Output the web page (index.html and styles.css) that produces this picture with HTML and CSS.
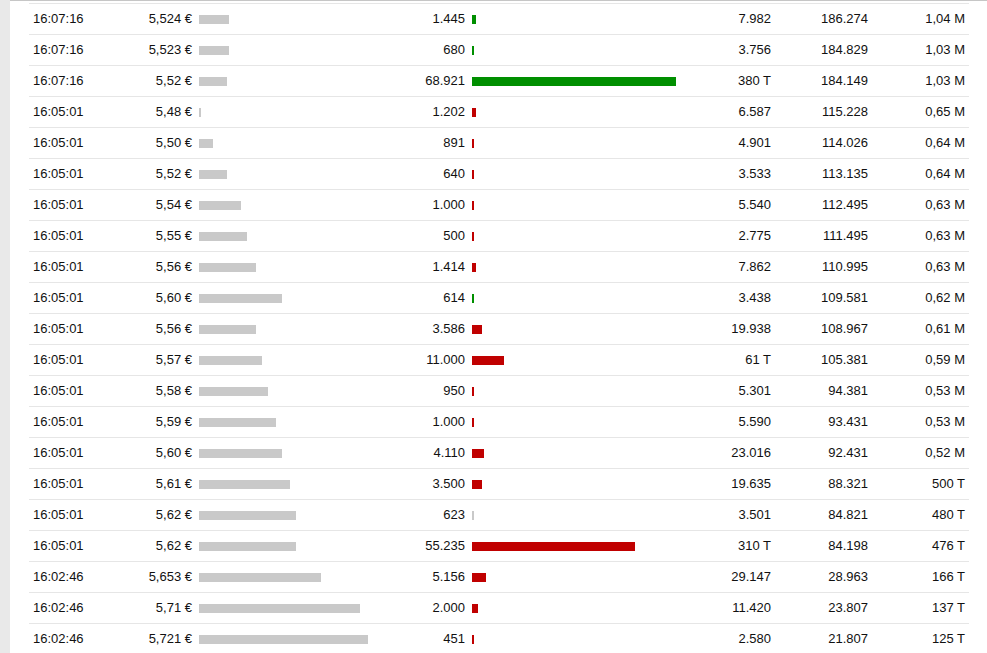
FILE: index.html
```html
<!DOCTYPE html>
<html>
<head>
<meta charset="utf-8">
<link rel="stylesheet" href="styles.css">
</head>
<body>
<div class="page">
  <div class="strip"></div>
  <div class="main">
    <div class="table">
      <div class="row"><span class="time">16:07:16</span><span class="num">5,524 €</span><span class="bars"><i class="pbar" style="width:30px"></i></span><span class="num">1.445</span><span class="bars"><i class="vbar up" style="width:4px"></i></span><span class="num">7.982</span><span class="num">186.274</span><span class="num">1,04 M</span></div>
      <div class="row"><span class="time">16:07:16</span><span class="num">5,523 €</span><span class="bars"><i class="pbar" style="width:30px"></i></span><span class="num">680</span><span class="bars"><i class="vbar up" style="width:2px"></i></span><span class="num">3.756</span><span class="num">184.829</span><span class="num">1,03 M</span></div>
      <div class="row"><span class="time">16:07:16</span><span class="num">5,52 €</span><span class="bars"><i class="pbar" style="width:28px"></i></span><span class="num">68.921</span><span class="bars"><i class="vbar up" style="width:204px"></i></span><span class="num">380 T</span><span class="num">184.149</span><span class="num">1,03 M</span></div>
      <div class="row"><span class="time">16:05:01</span><span class="num">5,48 €</span><span class="bars"><i class="pbar" style="width:2px"></i></span><span class="num">1.202</span><span class="bars"><i class="vbar down" style="width:4px"></i></span><span class="num">6.587</span><span class="num">115.228</span><span class="num">0,65 M</span></div>
      <div class="row"><span class="time">16:05:01</span><span class="num">5,50 €</span><span class="bars"><i class="pbar" style="width:14px"></i></span><span class="num">891</span><span class="bars"><i class="vbar down" style="width:2px"></i></span><span class="num">4.901</span><span class="num">114.026</span><span class="num">0,64 M</span></div>
      <div class="row"><span class="time">16:05:01</span><span class="num">5,52 €</span><span class="bars"><i class="pbar" style="width:28px"></i></span><span class="num">640</span><span class="bars"><i class="vbar down" style="width:2px"></i></span><span class="num">3.533</span><span class="num">113.135</span><span class="num">0,64 M</span></div>
      <div class="row"><span class="time">16:05:01</span><span class="num">5,54 €</span><span class="bars"><i class="pbar" style="width:42px"></i></span><span class="num">1.000</span><span class="bars"><i class="vbar down" style="width:2px"></i></span><span class="num">5.540</span><span class="num">112.495</span><span class="num">0,63 M</span></div>
      <div class="row"><span class="time">16:05:01</span><span class="num">5,55 €</span><span class="bars"><i class="pbar" style="width:48px"></i></span><span class="num">500</span><span class="bars"><i class="vbar down" style="width:2px"></i></span><span class="num">2.775</span><span class="num">111.495</span><span class="num">0,63 M</span></div>
      <div class="row"><span class="time">16:05:01</span><span class="num">5,56 €</span><span class="bars"><i class="pbar" style="width:57px"></i></span><span class="num">1.414</span><span class="bars"><i class="vbar down" style="width:4px"></i></span><span class="num">7.862</span><span class="num">110.995</span><span class="num">0,63 M</span></div>
      <div class="row"><span class="time">16:05:01</span><span class="num">5,60 €</span><span class="bars"><i class="pbar" style="width:83px"></i></span><span class="num">614</span><span class="bars"><i class="vbar up" style="width:2px"></i></span><span class="num">3.438</span><span class="num">109.581</span><span class="num">0,62 M</span></div>
      <div class="row"><span class="time">16:05:01</span><span class="num">5,56 €</span><span class="bars"><i class="pbar" style="width:57px"></i></span><span class="num">3.586</span><span class="bars"><i class="vbar down" style="width:10px"></i></span><span class="num">19.938</span><span class="num">108.967</span><span class="num">0,61 M</span></div>
      <div class="row"><span class="time">16:05:01</span><span class="num">5,57 €</span><span class="bars"><i class="pbar" style="width:63px"></i></span><span class="num">11.000</span><span class="bars"><i class="vbar down" style="width:32px"></i></span><span class="num">61 T</span><span class="num">105.381</span><span class="num">0,59 M</span></div>
      <div class="row"><span class="time">16:05:01</span><span class="num">5,58 €</span><span class="bars"><i class="pbar" style="width:69px"></i></span><span class="num">950</span><span class="bars"><i class="vbar down" style="width:2px"></i></span><span class="num">5.301</span><span class="num">94.381</span><span class="num">0,53 M</span></div>
      <div class="row"><span class="time">16:05:01</span><span class="num">5,59 €</span><span class="bars"><i class="pbar" style="width:77px"></i></span><span class="num">1.000</span><span class="bars"><i class="vbar down" style="width:2px"></i></span><span class="num">5.590</span><span class="num">93.431</span><span class="num">0,53 M</span></div>
      <div class="row"><span class="time">16:05:01</span><span class="num">5,60 €</span><span class="bars"><i class="pbar" style="width:83px"></i></span><span class="num">4.110</span><span class="bars"><i class="vbar down" style="width:12px"></i></span><span class="num">23.016</span><span class="num">92.431</span><span class="num">0,52 M</span></div>
      <div class="row"><span class="time">16:05:01</span><span class="num">5,61 €</span><span class="bars"><i class="pbar" style="width:91px"></i></span><span class="num">3.500</span><span class="bars"><i class="vbar down" style="width:10px"></i></span><span class="num">19.635</span><span class="num">88.321</span><span class="num">500 T</span></div>
      <div class="row"><span class="time">16:05:01</span><span class="num">5,62 €</span><span class="bars"><i class="pbar" style="width:97px"></i></span><span class="num">623</span><span class="bars"><i class="vbar flat" style="width:2px"></i></span><span class="num">3.501</span><span class="num">84.821</span><span class="num">480 T</span></div>
      <div class="row"><span class="time">16:05:01</span><span class="num">5,62 €</span><span class="bars"><i class="pbar" style="width:97px"></i></span><span class="num">55.235</span><span class="bars"><i class="vbar down" style="width:163px"></i></span><span class="num">310 T</span><span class="num">84.198</span><span class="num">476 T</span></div>
      <div class="row"><span class="time">16:02:46</span><span class="num">5,653 €</span><span class="bars"><i class="pbar" style="width:122px"></i></span><span class="num">5.156</span><span class="bars"><i class="vbar down" style="width:14px"></i></span><span class="num">29.147</span><span class="num">28.963</span><span class="num">166 T</span></div>
      <div class="row"><span class="time">16:02:46</span><span class="num">5,71 €</span><span class="bars"><i class="pbar" style="width:161px"></i></span><span class="num">2.000</span><span class="bars"><i class="vbar down" style="width:6px"></i></span><span class="num">11.420</span><span class="num">23.807</span><span class="num">137 T</span></div>
      <div class="row"><span class="time">16:02:46</span><span class="num">5,721 €</span><span class="bars"><i class="pbar" style="width:169px"></i></span><span class="num">451</span><span class="bars"><i class="vbar down" style="width:2px"></i></span><span class="num">2.580</span><span class="num">21.807</span><span class="num">125 T</span></div>
    </div>
  </div>
</div>
</body>
</html>
```
FILE: styles.css
```css
html, body {
  margin: 0;
  padding: 0;
  background: #ffffff;
}
body {
  font-family: "Liberation Sans", Arial, sans-serif;
  font-size: 13px;
  color: #111111;
}
.page {
  display: flex;
  height: 653px;
  overflow: hidden;
}
.strip {
  width: 10px;
  flex: none;
  background: #e9e9e9;
}
.main {
  flex: 1;
  border-top: 1px solid #c6c6c6;
  padding: 2px 18px 0 19px;
}
.table {
  width: 940px;
}
.row {
  display: grid;
  grid-template-columns: 91px 72px 203px 70px 235px 71px 97px 97px;
  align-items: center;
  height: 30px;
  line-height: 30px;
  border-top: 1px solid #e6e6e6;
  padding-right: 4px;
}
.time {
  padding-left: 4px;
}
.num {
  text-align: right;
  white-space: nowrap;
}
.bars {
  display: flex;
  align-items: center;
  padding-left: 7px;
  height: 30px;
}
.bars i {
  display: block;
  height: 9px;
  margin-top: 1px;
}
.pbar {
  background: #c9c9c9;
}
.vbar.up {
  background: #008f00;
}
.vbar.down {
  background: #c00000;
}
.vbar.flat {
  background: #c9c9c9;
}
```
